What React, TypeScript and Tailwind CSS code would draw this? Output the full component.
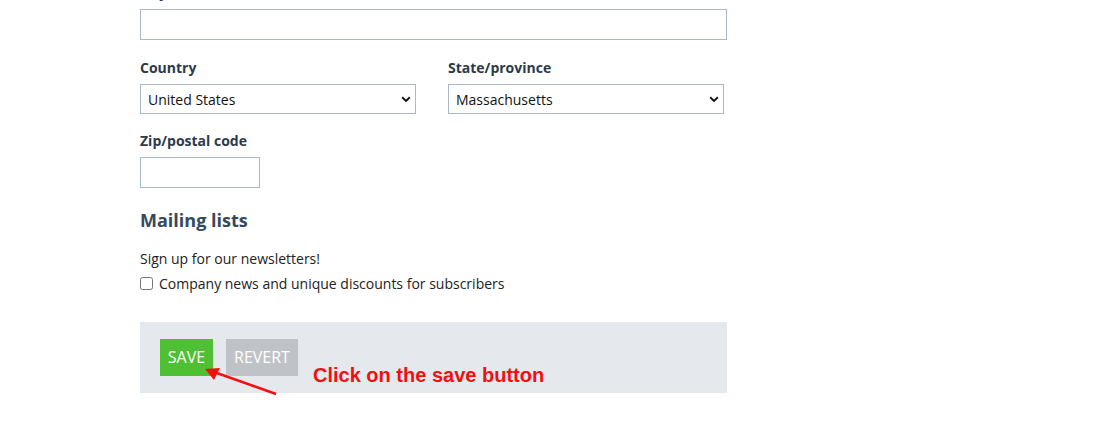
import React from "react";

const font = { fontFamily: '"Open Sans", "Noto Sans", sans-serif' };

function Chevron() {
  return (
    <svg width="10" height="7" viewBox="0 0 10 7" className="pointer-events-none absolute right-[5px] top-[12px]">
      <path d="M1.2 1.3 L5 5 L8.8 1.3" fill="none" stroke="#111" strokeWidth="1.9" />
    </svg>
  );
}

function Select({ value }: { value: string }) {
  return (
    <div className="relative w-[276px]">
      <select
        defaultValue={value}
        className="block h-[30px] w-full appearance-none border border-[#a9b9c9] bg-white pl-[7px] text-[14px] text-[#111]"
      >
        <option>{value}</option>
      </select>
      <Chevron />
    </div>
  );
}

function Label({ children }: { children: React.ReactNode }) {
  return <div className="mb-[6px] h-[20px] text-[14px] font-bold leading-[20px] text-[#2c3a4b]">{children}</div>;
}

export default function App() {
  return (
    <div className="min-h-[429px] bg-white pl-[140px]" style={font}>
      <div className="w-[587px]">
        <div className="-mt-[17px]">
          <Label>City</Label>
          <input className="block h-[31px] w-[587px] border border-[#a9b9c9] bg-white" />
        </div>

        <div className="mt-[18px] grid grid-cols-[276px_276px] gap-x-[32px]">
          <div>
            <Label>Country</Label>
            <Select value="United States" />
          </div>
          <div>
            <Label>State/province</Label>
            <Select value="Massachusetts" />
          </div>
        </div>

        <div className="mt-[17px]">
          <Label>Zip/postal code</Label>
          <input className="block h-[31px] w-[120px] border border-[#a9b9c9] bg-white" />
        </div>

        <h2 className="mt-[20px] h-[25px] text-[18px] font-bold leading-[25px] text-[#34495e]">Mailing lists</h2>
        <p className="mt-[16px] text-[14px] leading-[20px] text-[#222]">Sign up for our newsletters!</p>
        <label className="mt-[4px] flex h-[20px] items-center gap-[6px] text-[14px] text-[#222]">
          <input type="checkbox" className="m-0 h-[13px] w-[13px]" />
          Company news and unique discounts for subscribers
        </label>

        <div className="relative mt-[29px] flex h-[71px] gap-[13px] bg-[#e5e9ed] pl-[20px] pt-[17px]">
          <button className="h-[37px] w-[53px] bg-[#4fbf33] pb-[1px] text-[16px] font-medium text-white">SAVE</button>
          <button className="h-[37px] w-[72px] bg-[#bfc3c7] pb-[1px] text-[16px] font-medium text-white">REVERT</button>

          <span
            className="absolute left-[173px] top-[42px] whitespace-nowrap text-[20px] font-bold leading-[22px] text-[#f01010]"
            style={{ fontFamily: '"Liberation Sans", Arial, sans-serif' }}
          >
            Click on the save button
          </span>
          <svg width="80" height="36" viewBox="0 0 80 36" className="absolute left-[60px] top-[44px]">
            <line x1="76" y1="28" x2="14" y2="6" stroke="#f01010" strokeWidth="2.5" />
            <polygon points="5,3 20,2 14,14" fill="#f01010" />
          </svg>
        </div>
      </div>
    </div>
  );
}
